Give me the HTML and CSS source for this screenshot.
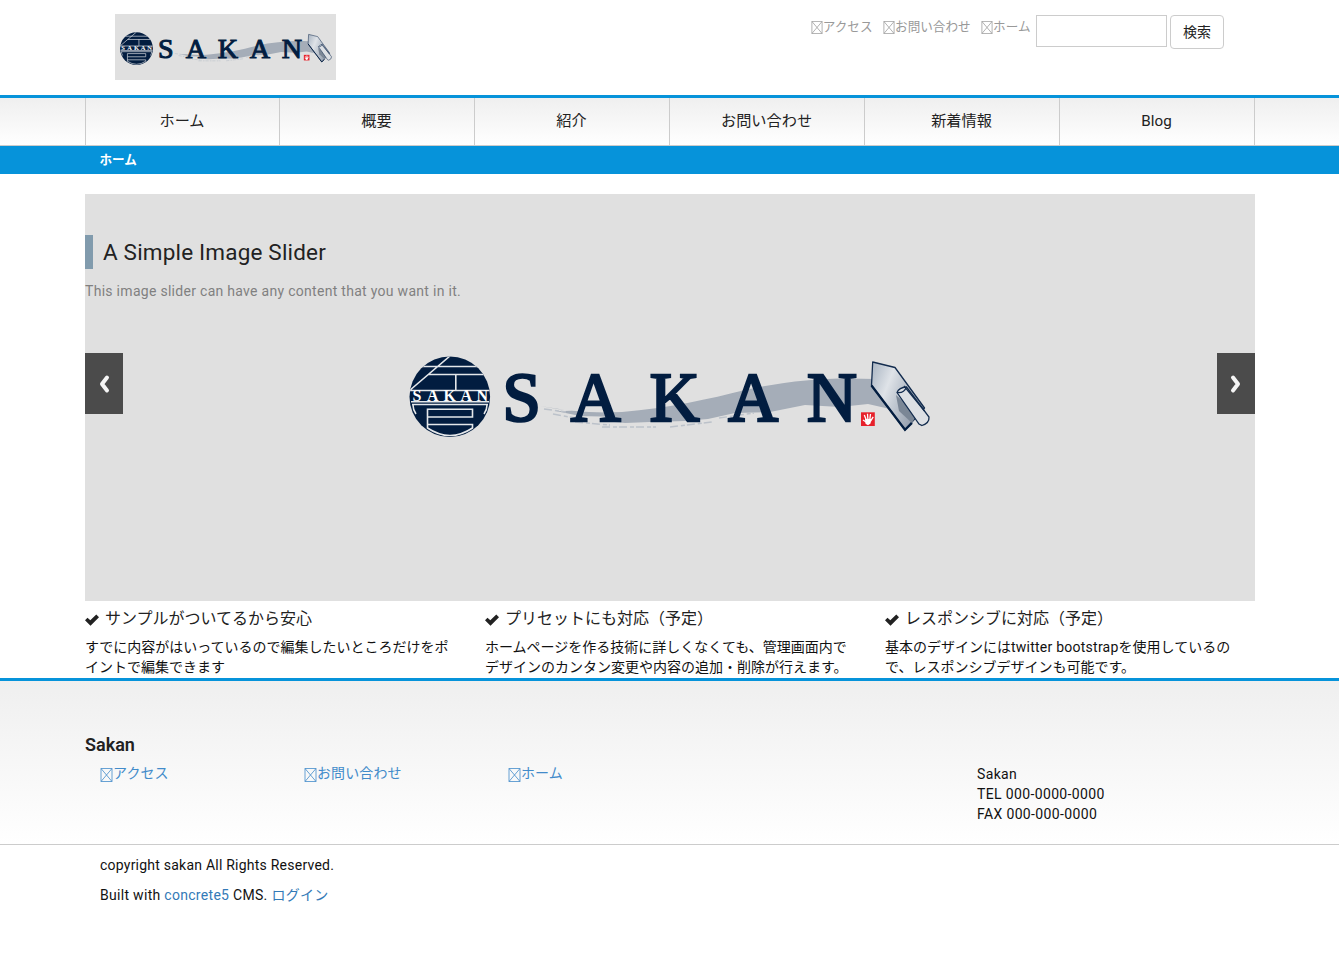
FILE: index.html
```html
<!DOCTYPE html>
<html lang="ja">
<head>
<meta charset="utf-8">
<title>Sakan</title>
<link rel="stylesheet" href="styles.css">
</head>
<body>
<svg class="defs" aria-hidden="true">
  <defs>
    <linearGradient id="steel" x1="0" y1="0.2" x2="1" y2="0.7">
      <stop offset="0" stop-color="#b3bdc9"/><stop offset="0.3" stop-color="#dfe3e8"/><stop offset="0.5" stop-color="#c3cad3"/><stop offset="1" stop-color="#8792a2"/>
    </linearGradient>
    <clipPath id="disc"><circle cx="449.8" cy="396.8" r="40.3"/></clipPath>
    <g id="logo">
      <path d="M540 406 Q580 414 622 412 C668 408 710 399 745 390 C790 380 830 377 875 379 L890 409 L868 404 L840 407 L805 405 L770 412 L735 413 L708 419 L685 421 L650 422 L625 423 L604 421 L620 417 L580 416 L556 411 L572 411Z" fill="#a5adb8"/>
      <path d="M544 409 l22 3 M553 414 l27 5 M575 422 l35 3 M602 427 l54 0 M670 427 l42 -5 M719 418 l35 -5" stroke="#bcc2ca" stroke-width="1.5" stroke-dasharray="8 3 4 2" fill="none"/>
      <circle cx="449.8" cy="396.8" r="40.3" fill="#021d40"/>
      <g clip-path="url(#disc)" fill="none" stroke="#e4e7ea" stroke-width="1.6">
        <path d="M409 366.5H491M428 374.5H491M455.8 374.5V390M409 390.5H491M450 356L409 391M411 401.7H489M412 404.5H488M413 405Q413 410 416 414M487 405Q487 410 484 414M427.5 409.2H472.500V417H427.5ZM427.500 417V428.5M427.500 424.500H472.500V428Q450 443 427.500 428"/>
      </g>
      <g class="logo-type disc-type"><text x="412.5" y="401">S</text><text x="427" y="401">A</text><text x="443.500" y="401">K</text><text x="460.500" y="401">A</text><text x="476.500" y="401">N</text></g>
      <g class="logo-type main-type"><text x="502.500" y="420.500">S</text><text x="570.800" y="420.500">A</text><text x="649.800" y="420.500">K</text><text x="728.200" y="420.500">A</text><text x="807" y="420.500">N</text></g>
      <rect x="861" y="412.300" width="13.800" height="13.700" fill="#e7212b"/>
      <path d="M864.300 415l2 5M867.500 413.700l.4 6M870.500 414l-.7 5.500M873.200 416.800l-2.800 4.500M863 420l3.500 2.200" stroke="#fff" stroke-width="1.300"/>
      <path d="M865 419h6.500l-1 4.500-2.500 1.700-2.500-1.500z" fill="#fff"/>
      <path d="M872.700 362L895 367.500L924.500 408L905 429.800L871.500 385.500Z" fill="url(#steel)" stroke="#132c4e" stroke-width="1.300" stroke-linejoin="round"/>
      <path d="M871.500 385.500L905 429.800L912 423" fill="none" stroke="#021d40" stroke-width="2.300"/>
      <path d="M896 395L899 411L912 423L917 414Z" fill="#7b8796"/>
      <path d="M897 392.500Q899 387.500 906.500 387L929 417Q929.500 423 922 425.500L919 424Z" fill="#dde0e4" stroke="#132c4e" stroke-width="1.300"/>
      <path d="M897 392.500Q904 393.500 906.500 387M904 386L924.500 411" fill="none" stroke="#132c4e" stroke-width="1.200"/>
    </g>
    <symbol id="box" viewBox="0 0 12 14"><path d="M.5 .5H11.500V13.500H.5ZM.5 .5L11.500 13.500M11.500 .5L.5 13.500" fill="none" stroke="currentColor" stroke-width=".8"/></symbol>
    <symbol id="check" viewBox="0 0 14 12"><path d="M0 6.300L2.500 3.700L5.300 6.300L11.300 .5L14 3.200L5.500 11.800Z" fill="currentColor"/></symbol>
  </defs>
</svg>

<header class="header">
  <svg class="brand" viewBox="397 312 543 162"><use href="#logo"/></svg>
  <div class="tools">
    <ul class="quick">
      <li><svg class="box"><use href="#box"/></svg>アクセス</li>
      <li><svg class="box"><use href="#box"/></svg>お問い合わせ</li>
      <li><svg class="box"><use href="#box"/></svg>ホーム</li>
    </ul>
    <input class="search" type="text" aria-label="検索">
    <button class="search-button">検索</button>
  </div>
</header>

<nav class="nav">
  <ul class="nav-list">
    <li>ホーム</li><li>概要</li><li>紹介</li><li>お問い合わせ</li><li>新着情報</li><li class="blog">Blog</li>
  </ul>
</nav>
<div class="crumb">ホーム</div>

<main class="main">
  <section class="slider">
    <svg class="slide-art" viewBox="85 194 1170 407"><use href="#logo"/></svg>
    <div class="slide-copy">
      <h1>A Simple Image Slider</h1>
      <p>This image slider can have any content that you want in it.</p>
    </div>
    <button class="arrow prev" aria-label="前へ"><svg viewBox="0 0 12 20"><path d="M9 3.500L4 10L9 16.500"/></svg></button>
    <button class="arrow next" aria-label="次へ"><svg viewBox="0 0 12 20"><path d="M3 3.500L8 10L3 16.500"/></svg></button>
  </section>
  <section class="features">
    <article><h2><svg class="check"><use href="#check"/></svg>サンプルがついてるから安心</h2>
      <p>すでに内容がはいっているので編集したいところだけをポ<br>イントで編集できます</p></article>
    <article><h2><svg class="check"><use href="#check"/></svg>プリセットにも対応（予定）</h2>
      <p>ホームページを作る技術に詳しくなくても、管理画面内で<br>デザインのカンタン変更や内容の追加・削除が行えます。</p></article>
    <article><h2><svg class="check"><use href="#check"/></svg>レスポンシブに対応（予定）</h2>
      <p>基本のデザインには<span class="latin">twitter bootstrap</span>を使用しているの<br>で、レスポンシブデザインも可能です。</p></article>
  </section>
</main>

<footer>
  <div class="foot">
    <h3>Sakan</h3>
    <div class="foot-row">
      <ul class="foot-links">
        <li><svg class="box"><use href="#box"/></svg>アクセス</li>
        <li><svg class="box"><use href="#box"/></svg>お問い合わせ</li>
        <li><svg class="box"><use href="#box"/></svg>ホーム</li>
      </ul>
      <address>Sakan<br>TEL 000-0000-0000<br>FAX 000-000-0000</address>
    </div>
  </div>
  <div class="legal">
    <p class="copyright">copyright sakan All Rights Reserved.</p>
    <p class="built">Built with <a>concrete5</a> CMS. <a class="login">ログイン</a></p>
  </div>
</footer>
</body>
</html>
```
FILE: styles.css
```css
* { box-sizing: border-box; }
body {
  margin: 0;
  background: #fff;
  color: #222;
  font: 14px/20px Roboto, "Noto Sans CJK JP", sans-serif;
}
ul, p, h1, h2, h3 { margin: 0; padding: 0; list-style: none; font-weight: 400; }
.defs { position: absolute; width: 0; height: 0; }
.logo-type { font-family: "Liberation Serif", serif; }
.main-type { font-size: 69px; fill: #021d40; stroke: #021d40; stroke-width: 2.600px; }
.disc-type { font-size: 16px; font-weight: 700; fill: #fff; }

.header {
  display: flex;
  justify-content: space-between;
  align-items: flex-start;
  height: 95px;
  padding: 14px 115px 0;
}
.brand { width: 221px; height: 66px; background: #e0e0e0; }
.tools { display: flex; align-items: flex-start; padding-top: 1px; }
.quick { display: flex; gap: 10.500px; margin: 3px 5.500px 0 0; color: #999; font-size: 12.600px; line-height: 18px; }
.quick li { display: flex; align-items: center; white-space: nowrap; }
.quick .box { width: 12px; height: 13px; }
.search { width: 131px; height: 32px; margin: 0 3px 0 0; border: 1px solid #ccc; background: #fff; }
.search-button {
  width: 54px;
  height: 34px;
  padding: 0 0 3px;
  border: 1px solid #ccc;
  border-radius: 4px;
  background: #fff;
  color: #222;
  font: 14px/20px "Noto Sans CJK JP", sans-serif;
}

.nav {
  height: 51px;
  padding-left: 85px;
  border-top: 3px solid #0693da;
  border-bottom: 1px solid #ccc;
  background: linear-gradient(#efefef, #fff);
}
.nav-list { display: flex; width: 1170px; height: 47px; border-left: 1px solid #ccc; }
.nav-list li { flex: 0 0 195px; padding-right: 1px; border-right: 1px solid #ccc; text-align: center; font-size: 15.200px; line-height: 46px; }
.nav-list li:first-child { flex-basis: 194px; }
.crumb { height: 28px; padding-left: 99.500px; background: #0693da; color: #fff; font-size: 12.600px; font-weight: 700; line-height: 28px; }

.main { width: 1170px; height: 504px; margin-left: 85px; padding-top: 20px; }
.slider { position: relative; height: 407px; background: #e0e0e0; }
.slide-art { position: absolute; inset: 0; width: 1170px; height: 407px; }
.slide-copy { position: relative; padding-top: 41px; }
.slide-copy h1 { height: 34px; padding-left: 10px; border-left: 8px solid #819bad; font-size: 22.500px; line-height: 35px; letter-spacing: .18px; }
.slide-copy p { margin-top: 12px; color: #808080; letter-spacing: .29px; }
.arrow { position: absolute; top: 159px; width: 38px; height: 61px; padding: 0; border: 0; background: #4b4b4b; }
.arrow svg { display: block; width: 12px; height: 20px; margin: 0 auto; fill: none; stroke: #f5f5f5; stroke-width: 4px; stroke-linecap: round; stroke-linejoin: round; }
.prev { left: 0; }
.next { right: 0; }
.features { display: flex; gap: 30px; }
.features article { width: 370px; white-space: nowrap; }
.features h2 { display: flex; align-items: center; gap: 6px; height: 36px; font-size: 16px; }
.features p { color: #111; }
.check { width: 14px; height: 12px; margin-top: 2px; }
.latin { letter-spacing: .24px; }

.foot { height: 167px; padding: 54px 85px 0; border-top: 3px solid #0693da; border-bottom: 1px solid #ccc; background: linear-gradient(#efefef, #fff); }
.foot h3 { font-size: 18px; font-weight: 600; line-height: 20px; }
.foot-row { display: flex; margin-top: 9px; padding-left: 15px; }
.foot-links { display: flex; width: 877px; margin-top: -1px; color: #428bca; }
.foot-links li { display: flex; align-items: center; width: 204px; height: 20px; letter-spacing: .1px; }
.foot-links .box { width: 13px; height: 14px; margin-top: 3px; }
address { color: #111; font-style: normal; letter-spacing: .36px; }
.legal { padding: 10px 100px 0; color: #111; }
.legal p { margin-bottom: 10px; letter-spacing: .23px; }
.legal .built { letter-spacing: .3px; }
.legal a { color: #337ab7; }
```
